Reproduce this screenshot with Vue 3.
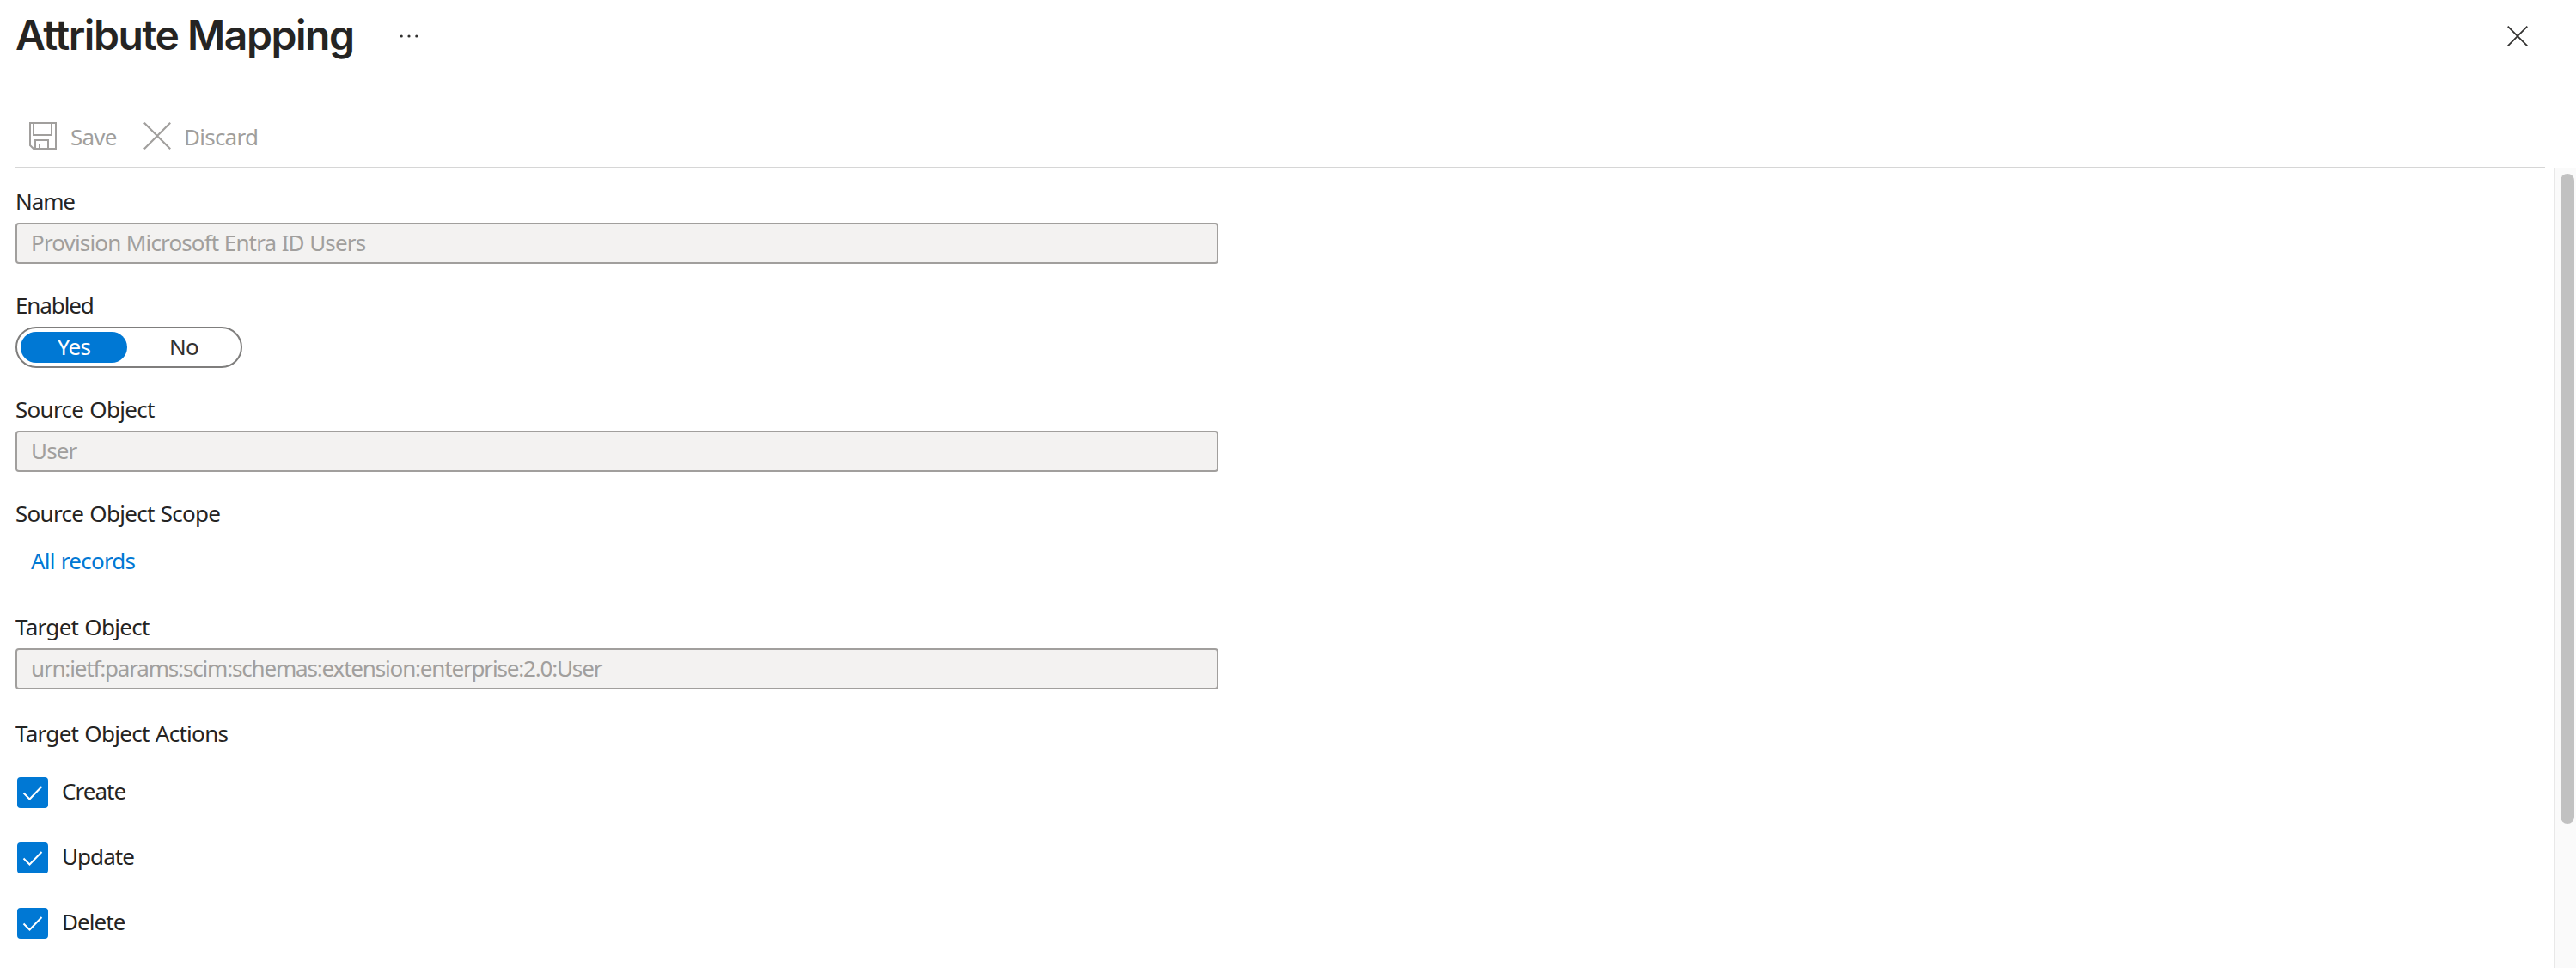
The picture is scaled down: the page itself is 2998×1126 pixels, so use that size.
<template>
  <div class="blade">
    <header class="blade-header">
      <h1 class="title">Attribute Mapping</h1>
      <button class="icon-btn more" aria-label="More">
        <svg width="22" height="6" viewBox="0 0 22 6" fill="#323130">
          <circle cx="2.2" cy="3" r="1.6" />
          <circle cx="11" cy="3" r="1.6" />
          <circle cx="19.8" cy="3" r="1.6" />
        </svg>
      </button>
      <button class="icon-btn close" aria-label="Close">
        <svg width="24" height="24" viewBox="0 0 24 24" fill="none" stroke="#323130" stroke-width="1.8">
          <path d="M.7.7l22.6 22.6M23.3.7L.7 23.3" />
        </svg>
      </button>
    </header>

    <div class="toolbar">
      <button class="command save" disabled>
        <svg width="32" height="32" viewBox="0 0 32 32" fill="none" stroke="#a19f9d" stroke-width="2">
          <path d="M1 1h30v30H5l-4-4z" />
          <path d="M5 1v14h21V1" />
          <path d="M7 31V21h15v10M12 25v6" />
        </svg>
        <span>Save</span>
      </button>
      <button class="command discard" disabled>
        <svg width="32" height="32" viewBox="0 0 32 32" fill="none" stroke="#a19f9d" stroke-width="2.2">
          <path d="M.8.8l30.4 30.4M31.2.8L.8 31.2" />
        </svg>
        <span>Discard</span>
      </button>
    </div>

    <div class="content">
      <form class="form" @submit.prevent>
        <div class="field">
          <label class="label short">Name</label>
          <input class="input" :value="mapping.name" disabled />
        </div>

        <div class="field">
          <label class="label short">Enabled</label>
          <div class="toggle">
            <button
              v-for="opt in ['Yes', 'No']"
              :key="opt"
              type="button"
              class="option"
              :class="{ active: enabled === opt }"
              @click="enabled = opt"
            >{{ opt }}</button>
          </div>
        </div>

        <div class="field">
          <label class="label">Source Object</label>
          <input class="input" :value="mapping.source" disabled />
        </div>

        <div class="field scope">
          <label class="label">Source Object Scope</label>
          <a class="link">All records</a>
        </div>

        <div class="field target">
          <label class="label">Target Object</label>
          <input class="input urn" :value="mapping.target" disabled />
        </div>

        <div class="label">Target Object Actions</div>
        <div class="actions">
          <div v-for="a in actions" :key="a.label" class="action" @click="a.checked = !a.checked">
            <span class="box" :class="{ checked: a.checked }">
              <svg v-if="a.checked" width="24" height="18" viewBox="0 0 24 18" fill="none" stroke="#fff" stroke-width="2">
                <path d="M1.5 9.5l7 7L22.5 2" />
              </svg>
            </span>
            <span class="action-label">{{ a.label }}</span>
          </div>
        </div>
      </form>
      <div class="scrollbar">
        <div class="thumb"></div>
      </div>
    </div>
  </div>
</template>

<script setup>
import { ref, reactive } from 'vue'

const mapping = {
  name: 'Provision Microsoft Entra ID Users',
  source: 'User',
  target: 'urn:ietf:params:scim:schemas:extension:enterprise:2.0:User',
}

const enabled = ref('Yes')

const actions = reactive([
  { label: 'Create', checked: true },
  { label: 'Update', checked: true },
  { label: 'Delete', checked: true },
])
</script>

<style>
body {
  margin: 0;
  background: #fff;
  overflow: hidden;
}
</style>

<style scoped>
.blade {
  display: flex;
  flex-direction: column;
  height: 1126px;
  box-sizing: border-box;
  font-family: "Noto Sans", "Open Sans", sans-serif;
  font-size: 26px;
  line-height: 36px;
  letter-spacing: -0.75px;
  color: #252423;
}
button {
  font: inherit;
  letter-spacing: inherit;
  color: inherit;
  background: none;
  border: none;
  padding: 0;
}
svg { display: block; flex-shrink: 0; }

.blade-header {
  display: flex;
  align-items: center;
  height: 84px;
  padding: 0 56px 0 18px;
}
.title {
  width: 447px;
  margin: -2px 0 0;
  font-family: Inter, sans-serif;
  font-size: 48px;
  line-height: 60px;
  font-weight: 600;
  letter-spacing: -1.45px;
  white-space: nowrap;
}
.close { margin-left: auto; }

.toolbar {
  display: flex;
  height: 110px;
  box-sizing: content-box;
  margin: 0 36px 0 18px;
  border-bottom: 2px solid #d6d6d6;
}
.command {
  display: flex;
  align-items: center;
  height: 36px;
  margin-top: 56px;
  color: #a19f9d;
}
.command span { padding-top: 2px; }
.save { margin-left: 16px; gap: 16px; width: 133px; }
.discard { gap: 15px; }

.content {
  display: flex;
  flex: 1;
  min-height: 0;
}
.form {
  flex: 1;
  padding: 20px 0 0 18px;
}
.field {
  width: 1400px;
  margin-bottom: 30px;
}
.label {
  display: block;
  height: 36px;
  letter-spacing: -0.7px;
  word-spacing: 1px;
}
.label.short { letter-spacing: -1.1px; }
.input {
  display: block;
  width: 100%;
  height: 48px;
  box-sizing: border-box;
  margin: 7px 0 0;
  padding: 0 16px 2px;
  font: inherit;
  letter-spacing: -0.85px;
  word-spacing: 0.5px;
  color: #a19f9d;
  background: #f3f2f1;
  border: 2px solid #a19f9d;
  border-radius: 4px;
}
.urn { letter-spacing: -1.17px; }
.toggle {
  display: flex;
  width: 264px;
  height: 48px;
  box-sizing: border-box;
  margin-top: 7px;
  padding: 4px;
  border: 2px solid #7f7e7d;
  border-radius: 24px;
}
.option {
  width: 124px;
  height: 36px;
  padding-bottom: 2px;
  line-height: 34px;
  border-radius: 18px;
  color: #323130;
}
.option.active {
  color: #fff;
  background: #0078d4;
}
.option + .option { margin-left: 4px; }

.scope { margin-bottom: 41px; }
.link {
  display: block;
  margin: 19px 0 0 18px;
  word-spacing: 1px;
  color: #0078d4;
}
.target { margin-bottom: 33px; }

.actions {
  display: flex;
  flex-direction: column;
  gap: 40px;
  margin: 33px 0 0 2px;
}
.action {
  display: flex;
  gap: 16px;
  height: 36px;
}
.box {
  display: flex;
  align-items: center;
  justify-content: center;
  width: 36px;
  height: 36px;
  box-sizing: border-box;
  border: 2px solid #323130;
  border-radius: 4px;
}
.box.checked {
  background: #0078d4;
  border-color: #0078d4;
}
.action-label {
  margin-top: -2px;
  letter-spacing: -0.95px;
}

.scrollbar {
  width: 18px;
  padding: 6px 0 0 6px;
  background: #fafafa;
  border-left: 2px solid #e8e8e8;
}
.thumb {
  width: 16px;
  height: 756px;
  border-radius: 8px;
  background: #c1c1c1;
}
</style>
